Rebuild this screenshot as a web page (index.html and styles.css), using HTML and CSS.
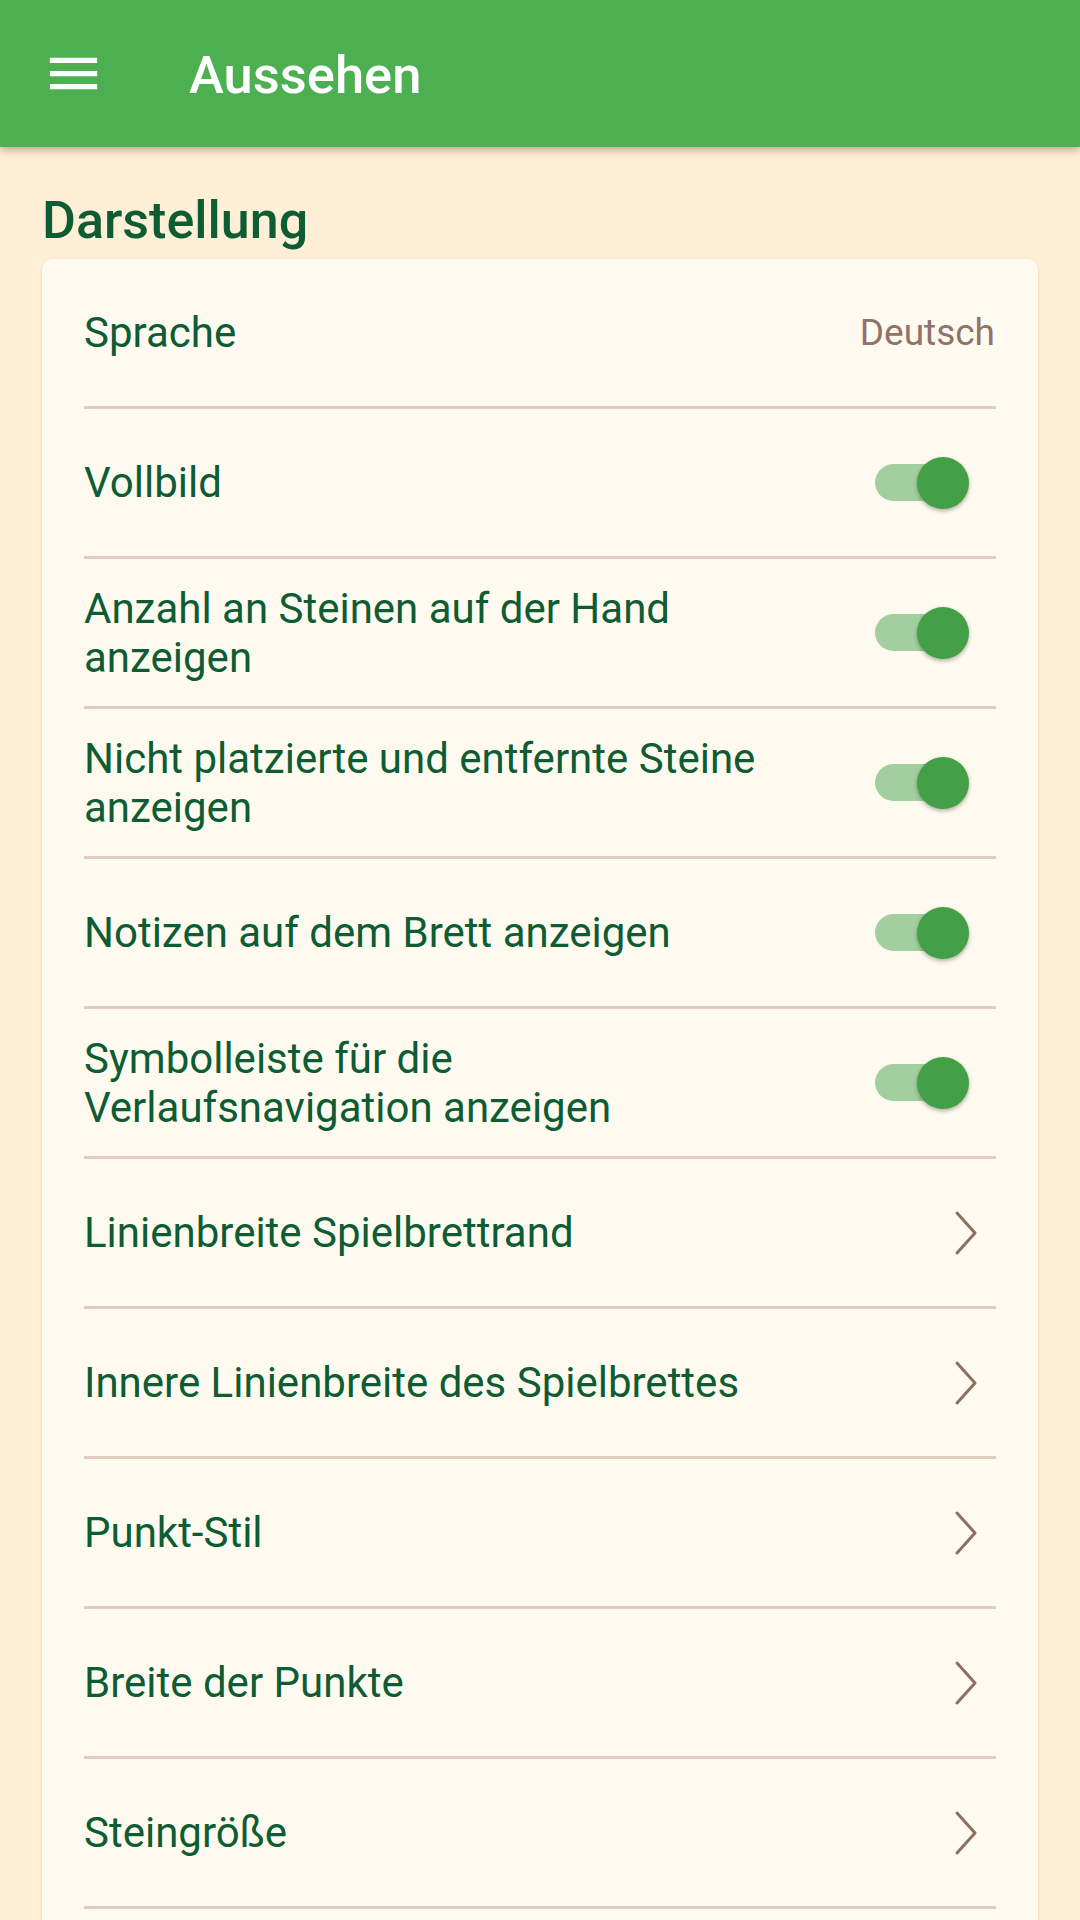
FILE: index.html
```html
<!DOCTYPE html>
<html lang="de">
<head>
<meta charset="utf-8">
<title>Aussehen</title>
<link rel="stylesheet" href="styles.css">
</head>
<body>
<header class="appbar">
  <svg class="menu" viewBox="0 0 24 24" width="63" height="63"><path d="M3 18h18v-2H3v2zm0-5h18v-2H3v2zm0-7v2h18V6H3z" fill="#fff"/></svg>
  <h1 class="title">Aussehen</h1>
</header>
<main class="content">
  <h2 class="section">Darstellung</h2>
  <section class="card">
    <div class="row"><div class="label">Sprache</div><div class="widget"><span class="value">Deutsch</span></div></div>
    <div class="row"><div class="label">Vollbild</div><div class="widget"><span class="toggle"><span class="track"></span><span class="thumb"></span></span></div></div>
    <div class="row"><div class="label">Anzahl an Steinen auf der Hand anzeigen</div><div class="widget"><span class="toggle"><span class="track"></span><span class="thumb"></span></span></div></div>
    <div class="row"><div class="label">Nicht platzierte und entfernte Steine anzeigen</div><div class="widget"><span class="toggle"><span class="track"></span><span class="thumb"></span></span></div></div>
    <div class="row"><div class="label">Notizen auf dem Brett anzeigen</div><div class="widget"><span class="toggle"><span class="track"></span><span class="thumb"></span></span></div></div>
    <div class="row"><div class="label">Symbolleiste für die Verlaufsnavigation anzeigen</div><div class="widget"><span class="toggle"><span class="track"></span><span class="thumb"></span></span></div></div>
    <div class="row"><div class="label">Linienbreite Spielbrettrand</div><div class="widget"><svg class="chev" width="24" height="46" viewBox="0 0 24 46"><polyline points="3,3 21,23 3,43" /></svg></div></div>
    <div class="row"><div class="label">Innere Linienbreite des Spielbrettes</div><div class="widget"><svg class="chev" width="24" height="46" viewBox="0 0 24 46"><polyline points="3,3 21,23 3,43" /></svg></div></div>
    <div class="row"><div class="label">Punkt-Stil</div><div class="widget"><svg class="chev" width="24" height="46" viewBox="0 0 24 46"><polyline points="3,3 21,23 3,43" /></svg></div></div>
    <div class="row"><div class="label">Breite der Punkte</div><div class="widget"><svg class="chev" width="24" height="46" viewBox="0 0 24 46"><polyline points="3,3 21,23 3,43" /></svg></div></div>
    <div class="row"><div class="label">Steingröße</div><div class="widget"><svg class="chev" width="24" height="46" viewBox="0 0 24 46"><polyline points="3,3 21,23 3,43" /></svg></div></div>
  </section>
</main>
</body>
</html>
```
FILE: styles.css
```css
html, body {
  margin: 0;
  padding: 0;
  height: 1920px;
  overflow: hidden;
}
body {
  background: #FFEFD6;
  font-family: Roboto, "Noto Sans", sans-serif;
}
.appbar {
  position: relative;
  z-index: 2;
  height: 147px;
  background: #4CAF50;
  display: flex;
  align-items: center;
  box-shadow: 0 3px 8px rgba(60, 40, 20, 0.35);
}
.menu {
  margin-left: 42px;
  flex: none;
}
.title {
  margin: 0 0 0 84px;
  font-size: 52.5px;
  font-weight: 500;
  color: #fff;
  line-height: 64px;
  padding-top: 2px;
}
.content {
  padding: 43px 42px 0 42px;
}
.section {
  margin: 0 0 8px 0;
  font-size: 52px;
  font-weight: 500;
  color: #0d5c33;
  line-height: 61px;
}
.card {
  background: #FFFAEF;
  border-radius: 10px 10px 0 0;
  box-shadow: 0 1px 3px rgba(120, 90, 50, 0.22);
  padding-bottom: 40px;
}
.row {
  display: flex;
  align-items: center;
  min-height: 147px;
  margin: 0 42px 0 42px;
  border-bottom: 3px solid #E0CBC3;
}
.label {
  flex: 1;
  font-size: 42px;
  line-height: 49px;
  color: #0d5c33;
  padding: 24px 0;
}
.widget {
  width: 215px;
  flex: none;
  display: flex;
  justify-content: flex-end;
  align-items: center;
}
.value {
  font-size: 37px;
  color: #8f7269;
  padding-right: 1px;
}
.toggle {
  position: relative;
  width: 94px;
  height: 52px;
  margin-right: 27px;
}
.track {
  position: absolute;
  left: 0;
  top: 7px;
  width: 89px;
  height: 37px;
  border-radius: 19px;
  background: #A3CF9F;
}
.thumb {
  position: absolute;
  right: 0;
  top: 0;
  width: 52px;
  height: 52px;
  border-radius: 50%;
  background: #43A047;
  box-shadow: 0 2px 4px rgba(0, 0, 0, 0.3);
}
.chev {
  margin-right: 18px;
}
.chev polyline {
  fill: none;
  stroke: #8d6e63;
  stroke-width: 3;
  stroke-linecap: round;
  stroke-linejoin: round;
}
```
